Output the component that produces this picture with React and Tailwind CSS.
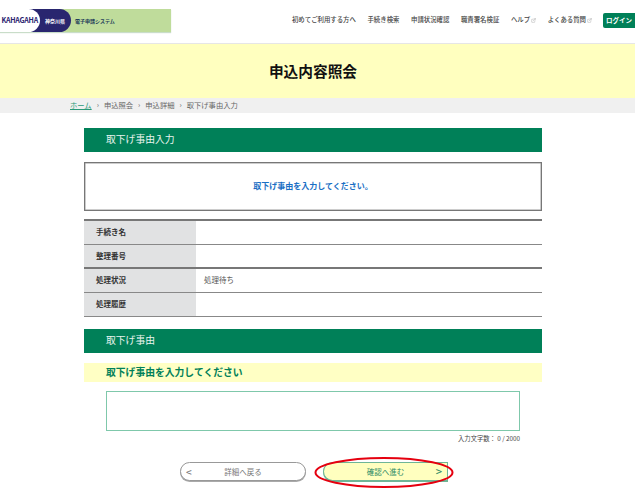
import { ExternalLink } from "lucide-react";

const navItems = [
  { label: "初めてご利用する方へ" },
  { label: "手続き検索" },
  { label: "申請状況確認" },
  { label: "職責署名検証" },
  { label: "ヘルプ", external: true },
  { label: "よくある質問", external: true },
];

const rows = [
  { name: "手続き名", value: "", heavy: false },
  { name: "整理番号", value: "", heavy: true },
  { name: "処理状況", value: "処理待ち", heavy: false },
  { name: "処理履歴", value: "", heavy: false },
];

function Logo() {
  return (
    <div className="flex h-[23px] w-[171px] items-stretch overflow-hidden bg-[#bfdc9b] shadow-[0_1px_1px_#c9ddc9]">
      <div className="z-20 flex w-[40px] items-center justify-end rounded-r-[12px] bg-white pr-[2px] text-[7px] font-bold leading-none tracking-[-0.2px] text-[#2a2470] whitespace-nowrap">
        KAHAGAHA
      </div>
      <div className="z-10 -ml-[12px] flex w-[43px] items-center justify-end rounded-r-[12px] bg-[#29266f] pr-[6px] text-[5px] font-bold leading-none text-white whitespace-nowrap">
        神奈川県
      </div>
      <div className="flex items-center pl-[4px] text-[5px] font-bold leading-none text-[#24405a] whitespace-nowrap">
        電子申請システム
      </div>
    </div>
  );
}

function SectionBar({ children }) {
  return (
    <div className="flex h-[24px] items-center bg-[#008058] pl-[22px] text-[9.8px] leading-none text-[#e8f4ee]">
      {children}
    </div>
  );
}

export default function App() {
  return (
    <div className="flex h-[500px] w-[635px] flex-col overflow-hidden bg-white font-['Noto_Sans_CJK_JP','Noto_Sans',sans-serif] text-[#333]">
      <header className="flex h-[44px] shrink-0 items-center justify-between border-b border-[#e6e6e6] pb-[2px]">
        <Logo />
        <div className="flex items-center">
          <nav className="flex items-center gap-[11.6px] text-[6.4px] font-medium leading-none text-[#444]">
            {navItems.map((item) => (
              <span key={item.label} className="flex items-center gap-[1px] whitespace-nowrap">
                {item.label}
                {item.external && <ExternalLink size={5} strokeWidth={1.5} className="text-[#888]" />}
              </span>
            ))}
          </nav>
          <div className="ml-[11px] flex h-[15px] w-[32px] items-center justify-center rounded-l-[2px] bg-[#008058] text-[6.5px] font-bold leading-none text-white whitespace-nowrap">
            ログイン
          </div>
        </div>
      </header>

      <div className="flex h-[54px] shrink-0 items-center justify-center bg-[#ffffbf] pr-[9px] text-[14.7px] font-bold leading-none text-[#111]">
        申込内容照会
      </div>

      <div className="flex h-[15px] shrink-0 items-center gap-[5px] bg-[#f0f0f0] pl-[70px] text-[7.3px] leading-none text-[#666]">
        <span className="text-[#2b9a78] underline">ホーム</span>
        <span>›</span>
        <span>申込照会</span>
        <span>›</span>
        <span>申込詳細</span>
        <span>›</span>
        <span>取下げ事由入力</span>
      </div>

      <main className="mx-[84px] w-[458px] pt-[15px]">
        <SectionBar>取下げ事由入力</SectionBar>

        <div className="mt-[10px] flex h-[49px] items-center justify-center border border-[#777] pb-[1px] text-[8px] font-bold leading-none text-[#1a6fc4] shadow-[inset_0_0_0_0.5px_#999]">
          取下げ事由を入力してください。
        </div>

        <div className="mt-[8px] border-t-2 border-[#777]">
          {rows.map((row) => (
            <div
              key={row.name}
              className={row.heavy ? "flex h-[24px] border-b-2 border-[#777]" : "flex h-[24px] border-b border-[#888]"}
            >
              <div className="flex w-[112px] items-center bg-[#e1e2e3] pb-[1px] pl-[12px] text-[7.5px] font-bold leading-none text-[#333]">
                {row.name}
              </div>
              <div className="flex items-center pb-[1px] pl-[8px] text-[7.5px] leading-none text-[#555]">{row.value}</div>
            </div>
          ))}
        </div>

        <div className="mt-[12px]">
          <SectionBar>取下げ事由</SectionBar>
        </div>

        <div className="mt-[10px] flex h-[19px] items-center bg-[#ffffc4] pl-[22px] text-[9.8px] font-bold leading-none text-[#008058]">
          取下げ事由を入力してください
        </div>

        <div className="ml-[22px] mt-[9px] h-[40px] w-[414px] border border-[#7fc8ab] bg-white" />

        <div className="ml-[22px] mt-[3px] w-[414px] text-right text-[6.3px] leading-[9px] text-[#444]">
          入力文字数： 0 / 2000
        </div>

        <div className="mt-[19px] flex items-center pl-[96px]">
          <button className="relative flex h-[19px] w-[126px] items-center justify-center rounded-full border border-[#999] bg-white text-[7.5px] leading-none text-[#777] shadow-[0_1px_0_#aaa]">
            <span className="absolute left-[5px] text-[10px] font-medium text-[#777]">&lt;</span>
            詳細へ戻る
          </button>
          <button className="relative ml-[17px] flex h-[19px] w-[125px] items-center justify-center rounded-l-full rounded-r-[5px] border border-[#6fb596] bg-[#ffffbf] text-[7.5px] leading-none text-[#2e8b66] shadow-[0_1px_0_#6fb596]">
            <span className="absolute right-[5px] text-[11px] font-medium text-[#2e8b66]">&gt;</span>
            確認へ進む
            <svg
              className="absolute -left-[10px] -top-[6px] overflow-visible"
              width="140"
              height="31"
              viewBox="0 0 140 31"
              fill="none"
            >
              <ellipse cx="70" cy="15.5" rx="68.5" ry="14.5" stroke="#e5000f" strokeWidth="2" />
            </svg>
          </button>
        </div>
      </main>
    </div>
  );
}
